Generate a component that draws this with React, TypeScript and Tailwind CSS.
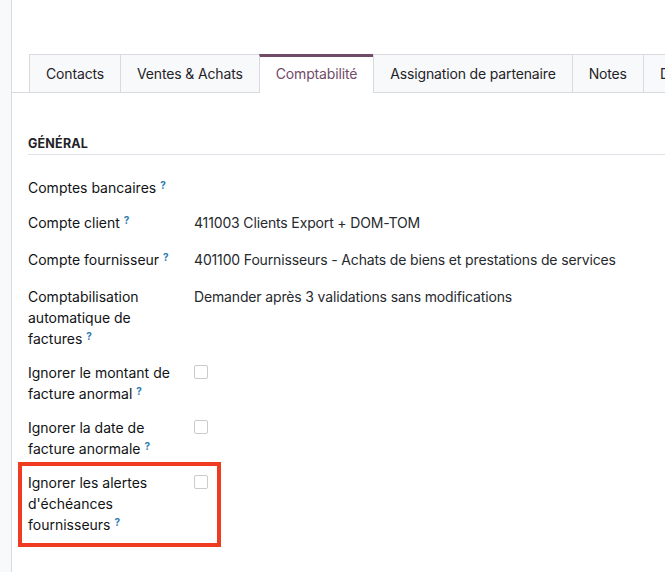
import React from "react"

const tabs = [
  { name: "Contacts" },
  { name: "Ventes & Achats" },
  { name: "Comptabilité", active: true },
  { name: "Assignation de partenaire" },
  { name: "Notes" },
  { name: "Données" },
]

const rows = [
  { label: "Comptes bancaires", value: "", empty: true },
  { label: "Compte client", value: "411003 Clients Export + DOM-TOM" },
  { label: "Compte fournisseur", value: "401100 Fournisseurs - Achats de biens et prestations de services" },
  { label: "Comptabilisation automatique de factures", value: "Demander après 3 validations sans modifications" },
  { label: "Ignorer le montant de facture anormal", check: true },
  { label: "Ignorer la date de facture anormale", check: true },
  { label: "Ignorer les alertes d'échéances fournisseurs", check: true, highlight: true },
]

const Help = () => (
  <sup className="ml-[4px] text-[10px] font-bold text-[#2d7bb0] relative -top-[4px]">?</sup>
)

const App = () => {
  return (
    <div
      className="flex w-[665px] h-[572px] overflow-hidden bg-white text-[14px] text-[#1f2328]"
      style={{ fontFamily: "Inter, 'Noto Sans', sans-serif" }}
    >
      <div className="w-[12px] shrink-0 bg-[#f8f9fa] border-r border-[#d8dadd]"></div>
      <div className="flex-1 min-w-0 pt-[54px]">
        <div className="flex border-b border-[#d8dadd] pl-[17px] h-[39px] whitespace-nowrap tracking-[-0.15px]">
          {tabs.map((tab, idx) => (
            <div
              key={idx}
              className={
                tab.active
                  ? "h-[39px] px-[16px] flex items-center shrink-0 bg-white border-x border-[#d8dadd] border-t-[3px] border-t-[#714b67] text-[#714b67] -ml-px -mb-px pb-[3px]"
                  : "h-[38px] px-[16px] flex items-center shrink-0 bg-[#f8f9fa] border border-b-0 border-[#d8dadd] -ml-px first:ml-0 text-[#1f2328]"
              }
            >
              {tab.name}
            </div>
          ))}
        </div>

        <div className="pl-[16px] pt-[43px]">
          <div className="border-b border-[#dee2e6] pb-[3px] leading-[15px] text-[12.5px] font-bold tracking-[0.2px] uppercase text-[#1f2328]">
            Général
          </div>

          <div className="pt-[22px] flex flex-col gap-[13px]">
            {rows.map((row, idx) => (
              <div key={idx} className="relative flex leading-[21px]">
                {row.highlight && (
                  <div className="absolute -left-[10px] -top-[10px] w-[203px] h-[85px] border-[4px] border-[#ee3b22] pointer-events-none"></div>
                )}
                <div className="w-[166px] shrink-0 text-[#111315] pr-2">
                  {row.label}
                  <Help />
                </div>
                <div className={row.empty ? "flex-1 min-h-[22px]" : "flex-1 text-[#262a2e] min-h-[24px] tracking-[-0.15px]"}>
                  {row.check ? (
                    <div className="w-[14px] h-[14px] border border-[#c9cbce] rounded-[2px] mt-[3px] bg-white"></div>
                  ) : (
                    row.value
                  )}
                </div>
              </div>
            ))}
          </div>
        </div>
      </div>
    </div>
  )
}

export default App
